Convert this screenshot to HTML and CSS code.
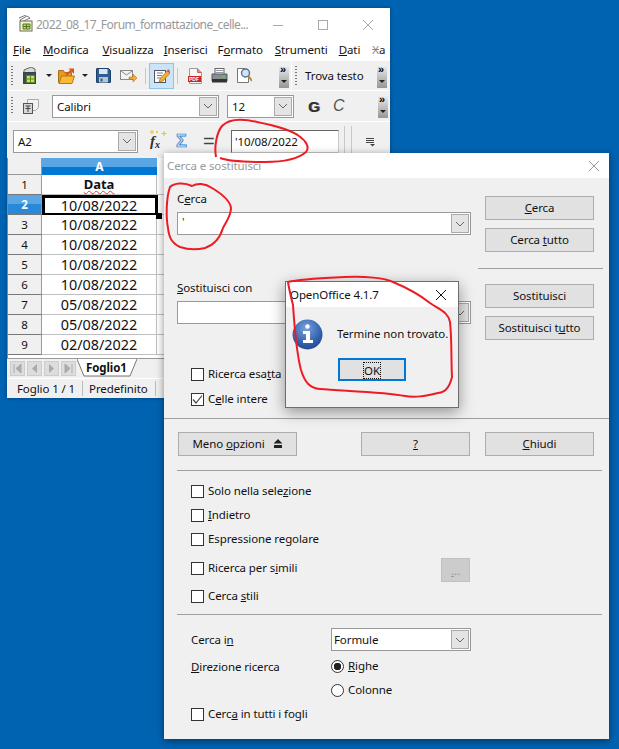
FILE: index.html
```html
<!DOCTYPE html>
<html lang="it">
<head>
<meta charset="utf-8">
<title>Cerca e sostituisci</title>
<link rel="stylesheet" href="styles.css">
</head>
<body>
<main class="desktop">

<section class="calc">
  <header class="calc-title">
    <svg class="calc-logo" width="15" height="17" viewBox="0 0 15 17"><path d="M2 5 9 1l3 2-8 4zM1 3l7-3" fill="none" stroke="#777" stroke-width="1"/><rect x="2" y="6" width="12" height="10" fill="#f4f4d8" stroke="#6a6a50"/><path d="M5 9h7v5H5zM8.500 9v5M5 11.500h7" fill="#b8d070" stroke="#4e7a18"/></svg>
    <span class="calc-name">2022_08_17_Forum_formattazione_celle...</span>
    <span class="win-btns">
      <svg width="12" height="12" viewBox="0 0 12 12"><path d="M1 6.500h10" stroke="#aaa"/></svg>
      <svg width="12" height="12" viewBox="0 0 12 12"><rect x="1.500" y="1.500" width="9" height="9" fill="none" stroke="#aaa"/></svg>
      <svg width="12" height="12" viewBox="0 0 12 12"><path d="M1 1l10 10M11 1 1 11" stroke="#aaa"/></svg>
    </span>
  </header>
  <nav class="menu">
    <span class="m-file"><u>F</u>ile</span><span class="m-mod"><u>M</u>odifica</span><span class="m-vis"><u>V</u>isualizza</span><span class="m-ins"><u>I</u>nserisci</span><span class="m-for">F<u>o</u>rmato</span><span class="m-str"><u>S</u>trumenti</span><span class="m-dat"><u>D</u>ati</span><span class="menu-cut"><s>X</s>a</span>
  </nav>
  <div class="bar bar-main">
    <i class="grip"></i>
    <svg class="ico ico-new" width="16" height="17" viewBox="0 0 16 17"><path d="M2 6V3l7-3 4 2v4" fill="#d9d9d9" stroke="#666"/><rect x="1.500" y="5.500" width="12" height="11" fill="#3f4a50" stroke="#3a4348"/><path d="M4.500 8.500h8v7h-8zM8.500 8.500v7M4.500 12h8" fill="#c6dc7e" stroke="#5d8a1e"/></svg>
    <i class="drop"></i>
    <svg class="ico ico-open" width="17" height="16" viewBox="0 0 17 16"><path d="M.5 2.500h5l1 2h7v10H.5z" fill="#e89a1c" stroke="#a8701a"/><path d="M1 15.500 3.500 8h13L14 15.500z" fill="#fbb934" stroke="#b4781f"/><path d="M8 7l6-5" stroke="#e2521c" stroke-width="2.200" fill="none"/><path d="M10.500.5H16V6z" fill="#e2521c"/></svg>
    <i class="drop"></i>
    <svg class="ico ico-save" width="15" height="15" viewBox="0 0 15 15"><path d="M1 .5h11.500l2 2V14a.5.5 0 0 1-.5.5H1a.5.5 0 0 1-.5-.5V1A.5.500 0 0 1 1 .5z" fill="#2b5d93" stroke="#1c3f66"/><rect x="3" y="1" width="8.500" height="5" fill="#dbe5ee"/><rect x="3" y="9" width="9" height="5.500" fill="#b8c6d2"/><rect x="4.500" y="10.500" width="2" height="3" fill="#2b5d93"/></svg>
    <svg class="ico ico-mail" width="17" height="12" viewBox="0 0 17 12"><rect x=".5" y=".5" width="12" height="9" fill="#f2f2f2" stroke="#8a8a8a"/><path d="M1 1l5.500 4L12 1" fill="none" stroke="#8a8a8a"/><path d="M9 7h4V4l4 4-4 4V9H9z" fill="#f2b02c" stroke="#b4781f" stroke-width=".6"/></svg>
    <i class="sep"></i>
    <span class="active-tool"><svg width="17" height="17" viewBox="0 0 17 17"><rect x="1.500" y="3.500" width="11" height="12" fill="#fff" stroke="#556"/><path d="M4 6h6M4 8.500h5M4 11h4" stroke="#778"/><path d="M7 12l7-8 3 2-7 8-4 1z" fill="#f2b02c" stroke="#a8701a" stroke-width=".7"/><path d="M14 4l1-2 2 2-.5 2z" fill="#e0457a"/></svg></span>
    <i class="sep sep-after"></i>
    <svg class="ico ico-pdf" width="14" height="16" viewBox="0 0 14 16"><path d="M1.500.500h8l4 4v11h-12z" fill="#f8f8f8" stroke="#999"/><path d="M9.500.5v4h4" fill="#e88" stroke="#c66"/><rect y="8" width="13" height="6" fill="#c9261d"/><text x="1" y="13" class="pdf-text">PDF</text></svg>
    <svg class="ico ico-print" width="17" height="15" viewBox="0 0 17 15"><rect x="4" y=".5" width="9" height="6" fill="#fff" stroke="#666"/><path d="M4.500 2.500h8M4.500 4.500h8" stroke="#99a"/><path d="M1 6h15v7H1z" fill="#8a8e92" stroke="#55585c"/><rect x="1" y="11" width="15" height="3.500" fill="#2f3337"/><rect x="11" y="8" width="3" height="1.500" fill="#5fc25f"/></svg>
    <svg class="ico ico-view" width="16" height="17" viewBox="0 0 16 17"><path d="M1.500 1.500h7l4 4v10h-11z" fill="#fff" stroke="#777"/><circle cx="9.500" cy="6" r="4" fill="#cfe4f6" stroke="#53718f" stroke-width="1.400"/><path d="M12.500 9l3.500 5" stroke="#c08a2a" stroke-width="2"/></svg>
    <span class="overflow ov-a"><b>»</b><em></em></span>
    <i class="bar-split"></i>
    <i class="grip grip-find"></i>
    <span class="find-text">Trova testo</span>
    <span class="overflow"><b>»</b><em></em></span>
  </div>
  <div class="bar bar-font">
    <i class="grip grip-short"></i>
    <svg class="ico ico-style" width="16" height="15" viewBox="0 0 16 15"><path d="M4.500.5h11v8l-3 3h-8z" fill="#f2f2f2" stroke="#aaa"/><rect x=".5" y="4.500" width="9" height="10" fill="#d8d8d8" stroke="#555"/><path d="M2.500 7h5M5 7v6M2.500 9.500h5" stroke="#444" fill="none"/></svg>
    <span class="combo combo-font"><span class="combo-text">Calibri</span><span class="arrow"><svg width="10" height="6" viewBox="0 0 10 6"><path d="M1 1l4 4 4-4" fill="none" stroke="#666"/></svg></span></span>
    <span class="combo combo-size"><span class="combo-text">12</span><span class="arrow"><svg width="10" height="6" viewBox="0 0 10 6"><path d="M1 1l4 4 4-4" fill="none" stroke="#666"/></svg></span></span>
    <span class="font-g">G</span>
    <span class="font-c">C</span>
    <span class="overflow ov-font"><b>»</b><em></em></span>
  </div>
  <div class="formula">
    <span class="combo combo-ref"><span class="combo-text">A2</span><span class="arrow"><svg width="10" height="6" viewBox="0 0 10 6"><path d="M1 1l4 4 4-4" fill="none" stroke="#666"/></svg></span></span>
    <span class="fx">f<sub>x</sub><svg class="fx-spark" width="17" height="8" viewBox="0 0 17 8"><path d="M2 0v4M0 2h4M7 1v2M6 2h2M14 1v5M11.500 3.500h5" stroke="#e9c21e" stroke-width="1"/></svg></span>
    <span class="sigma">Σ</span>
    <span class="equals">=</span>
    <span class="input-line">'10/08/2022</span>
    <i class="form-sep"></i>
    <i class="form-sep form-sep-b"></i>
    <svg class="form-menu" width="10" height="9" viewBox="0 0 10 9"><path d="M0 .5h8M0 2.500h8M0 4.500h8" stroke="#444"/><path d="M4 6h5L6.500 8.500z" fill="#444"/></svg>
  </div>
  <div class="sheet">
    <div class="sheet-row sheet-head"><span class="rh corner"></span><span class="cell col-a">A</span></div>
    <div class="sheet-row"><span class="rh">1</span><span class="cell head-cell">Data</span><span class="cell-b"></span></div>
    <div class="sheet-row"><span class="rh rh-sel">2</span><span class="cell cell-sel">10/08/2022<i class="handle"></i></span><span class="cell-b"></span></div>
    <div class="sheet-row"><span class="rh">3</span><span class="cell">10/08/2022</span><span class="cell-b"></span></div>
    <div class="sheet-row"><span class="rh">4</span><span class="cell">10/08/2022</span><span class="cell-b"></span></div>
    <div class="sheet-row"><span class="rh">5</span><span class="cell">10/08/2022</span><span class="cell-b"></span></div>
    <div class="sheet-row"><span class="rh">6</span><span class="cell">10/08/2022</span><span class="cell-b"></span></div>
    <div class="sheet-row"><span class="rh">7</span><span class="cell">05/08/2022</span><span class="cell-b"></span></div>
    <div class="sheet-row"><span class="rh">8</span><span class="cell">05/08/2022</span><span class="cell-b"></span></div>
    <div class="sheet-row"><span class="rh">9</span><span class="cell">02/08/2022</span><span class="cell-b"></span></div>
  </div>
  <div class="tabs">
    <span class="tab-nav"><svg width="13" height="13" viewBox="0 0 13 13"><path d="M3 2v9M10 2v9L5 6.500z" fill="#aaa" stroke="#aaa"/></svg></span>
    <span class="tab-nav"><svg width="13" height="13" viewBox="0 0 13 13"><path d="M9 2v9L4 6.500z" fill="#aaa"/></svg></span>
    <span class="tab-nav"><svg width="13" height="13" viewBox="0 0 13 13"><path d="M4 2v9l5-4.500z" fill="#aaa"/></svg></span>
    <span class="tab-nav"><svg width="13" height="13" viewBox="0 0 13 13"><path d="M10 2v9M3 2v9l5-4.500z" fill="#aaa" stroke="#aaa"/></svg></span>
    <svg class="tab-shape" width="60" height="19" viewBox="0 0 60 19"><path d="M0 0l7 17h46l7-17" fill="#fff" stroke="#777"/></svg>
    <span class="tab-name">Foglio1</span>
  </div>
  <footer class="status"><span>Foglio 1 / 1</span><span>Predefinito</span></footer>
</section>

<section class="dialog">
  <header class="dlg-title"><span>Cerca e sostituisci</span>
    <svg width="12" height="12" viewBox="0 0 12 12"><path d="M1 1l10 10M11 1 1 11" stroke="#999"/></svg>
  </header>
  <div class="dlg-top">
    <div class="dlg-left">
      <label class="field-label"><span>C<u>e</u>rca</span></label>
      <span class="combo combo-wide"><span class="combo-text combo-quote">'</span><span class="arrow"><svg width="10" height="6" viewBox="0 0 10 6"><path d="M1 1l4 4 4-4" fill="none" stroke="#666"/></svg></span></span>
      <label class="field-label label-replace"><span><u>S</u>ostituisci con</span></label>
      <span class="combo combo-wide"><span class="combo-text"></span><span class="arrow"><svg width="10" height="6" viewBox="0 0 10 6"><path d="M1 1l4 4 4-4" fill="none" stroke="#666"/></svg></span></span>
      <div class="check check-first"><i class="box"></i><span>Ricerca esa<u>t</u>ta</span></div>
      <div class="check check-second"><i class="box"><svg width="13" height="13" viewBox="0 0 13 13"><path d="M2 6.500 5 10l6-7.500" fill="none" stroke="#444" stroke-width="1.200"/></svg></i><span>C<u>e</u>lle intere</span></div>
    </div>
    <div class="dlg-right">
      <button class="btn" type="button"><u>C</u>erca</button>
      <button class="btn" type="button">Cerca <u>t</u>utto</button>
      <hr class="rule-right">
      <button class="btn" type="button">Sostituisci</button>
      <button class="btn" type="button">Sostituisci t<u>u</u>tto</button>
    </div>
  </div>
  <hr class="rule-full">
  <div class="dlg-actions">
    <button class="btn btn-more" type="button"><span>Meno <u>o</u>pzioni</span><svg width="10" height="10" viewBox="0 0 10 10"><path d="M5 0l4.500 4.500H.5zM1 6h8v3H1z" fill="#222"/></svg></button>
    <button class="btn btn-help" type="button"><u>?</u></button>
    <button class="btn" type="button"><u>C</u>hiudi</button>
  </div>
  <hr class="rule-inner">
  <div class="options">
    <div class="check"><i class="box"></i><span>Solo nella sele<u>z</u>ione</span></div>
    <div class="check"><i class="box"></i><span><u>I</u>ndietro</span></div>
    <div class="check"><i class="box"></i><span>Espressione re<u>g</u>olare</span></div>
    <div class="check check-similar"><i class="box"></i><span>Ricerca per s<u>i</u>mili</span><span class="btn-dots"><u>.</u>..</span></div>
    <div class="check check-styles"><i class="box"></i><span>Cerca <u>s</u>tili</span></div>
  </div>
  <hr class="rule-inner rule-second">
  <div class="scope">
    <span class="scope-label scope-first">Cerca i<u>n</u></span>
    <span class="combo combo-in"><span class="combo-text">Formule</span><span class="arrow"><svg width="10" height="6" viewBox="0 0 10 6"><path d="M1 1l4 4 4-4" fill="none" stroke="#666"/></svg></span></span>
    <span class="scope-label scope-dir"><u>D</u>irezione ricerca</span>
    <div class="check"><i class="radio radio-on"></i><span><u>R</u>ighe</span></div>
    <span></span>
    <div class="check"><i class="radio"></i><span>Colonne</span></div>
    <div class="check scope-wide"><i class="box"></i><span>Cerc<u>a</u> in tutti i fogli</span></div>
  </div>
</section>

<section class="msgbox">
  <header class="msg-title"><span>OpenOffice 4.1.7</span>
    <svg width="12" height="12" viewBox="0 0 12 12"><path d="M1 1l10 10M11 1 1 11" stroke="#111"/></svg>
  </header>
  <div class="msg-body">
    <svg class="msg-icon" width="31" height="31" viewBox="0 0 31 31"><defs><radialGradient id="ig" cx=".45" cy=".3" r=".8"><stop offset="0" stop-color="#7da2dc"/><stop offset=".6" stop-color="#3463b0"/><stop offset="1" stop-color="#1c3f85"/></radialGradient></defs><circle cx="15.500" cy="15.500" r="15" fill="url(#ig)"/><circle cx="15.500" cy="7.500" r="2.200" fill="#fff"/><path d="M11 12h7v9h3v3H11v-3h3v-6h-3z" fill="#fff"/></svg>
    <span class="msg-text">Termine non trovato.</span>
  </div>
  <div class="msg-actions"><button class="btn-ok" type="button"><span>OK</span></button></div>
</section>

<svg class="ink" width="619" height="749" viewBox="0 0 619 749">
  <path d="M216 157C214 146 217 132 222 126 229 119 240 118 257 122 272 125 290 129 299 136 306 141 310 147 306 152 298 159 285 162 265 162 245 162 228 161 220 158"/>
  <path d="M170 187C174 183 184 182 192 186 197 183 205 183 212 188 222 194 230 200 231 208 231 216 226 222 223 228 220 238 214 245 205 248 196 250 186 249 180 247 172 243 169 238 168 228 166 218 166 198 170 187Z"/>
  <path d="M288 282C300 279 325 278 345 277 365 276 385 278 393 282 405 287 420 295 430 303 440 310 448 312 450 322 452 340 451 360 452 377 450 385 447 392 438 393 425 396 415 398 405 396 385 392 345 391 320 389 310 388 305 383 301 370 297 355 295 335 293 305 291 297 289 289 288 282Z"/>
</svg>
</main>
</body>
</html>
```
FILE: styles.css
```css
* { box-sizing: border-box; }
html, body { margin: 0; padding: 0; }
body { width: 619px; height: 749px; overflow: hidden; font: 11.500px/16px "Noto Sans", "Open Sans", sans-serif; letter-spacing: -.1px; color: #111; }
.desktop { position: relative; width: 619px; height: 749px; background: #0063b1; overflow: hidden; }
u { text-underline-offset: 1px; }
i { font-style: normal; display: block; flex: none; }

.calc { position: absolute; left: 7px; top: 8px; width: 383px; height: 390px; background: #f0f0f0; box-shadow: 0 0 4px rgba(0,0,0,.35); display: flex; flex-direction: column; }
.calc-title { height: 33px; flex: none; background: #fff; display: flex; align-items: center; padding-left: 11px; }
.calc-logo { flex: none; margin-top: -2px; }
.calc-name { margin-left: 3px; color: #999; font-size: 12px; letter-spacing: -.55px; white-space: nowrap; width: 222px; }
.win-btns { display: flex; gap: 33px; margin-left: 14px; }
.menu { height: 19px; flex: none; background: #fff; display: flex; padding: 0 0 2px 6px; white-space: nowrap; align-items: center; }
.m-mod { margin-left: 12px; }
.m-vis { margin-left: 14px; }
.m-ins { margin-left: 10px; }
.m-for { margin-left: 10px; }
.m-str { margin-left: 12px; }
.m-dat { margin-left: 11px; }
.menu-cut { color: #222; margin-left: 12px; }
.menu-cut s { color: #888; }

.bar { display: flex; align-items: center; position: relative; flex: none; border-bottom: 1px solid #fff; }
.bar-main { height: 31px; border-top: 1px solid #fff; padding-left: 4px; }
.bar-font { height: 31px; padding: 0 2px 0 4px; }
.grip { width: 2px; height: 20px; background: repeating-linear-gradient(#777 0 1px, transparent 1px 3px); }
.grip-short { height: 18px; }
.grip-find { margin-left: 3px; }
.ico { flex: none; display: block; }
.ico-new { margin-left: 9px; }
.drop { width: 0; height: 0; border: 3px solid transparent; border-top: 3px solid #222; border-bottom: 0; margin-left: 8px; }
.ico-open { margin-left: 6px; }
.ico-open + .drop { margin-left: 7px; }
.ico-save { margin-left: 8px; }
.ico-mail { margin-left: 9px; }
.sep { width: 1px; height: 16px; background: #c8c8c8; margin: 0 3px 0 8px; }
.active-tool { width: 25px; height: 26px; background: #cce4f7; border: 1px solid #8fc4ec; display: flex; align-items: center; justify-content: center; flex: none; }
.sep-after { margin: 0 10px 0 3px; }
.pdf-text { font: bold 5px "Liberation Sans", sans-serif; fill: #fff; letter-spacing: 0; }
.ico-print { margin-left: 9px; }
.ico-view { margin-left: 8px; }
.overflow { width: 10px; height: 24px; flex: none; background: linear-gradient(#f0f0f0 0 8%, #dcdcdc 25%, #969696); position: relative; display: block; }
.overflow b { position: absolute; left: 1px; top: -1px; font: bold 11px/12px "Liberation Sans", sans-serif; color: #000; letter-spacing: 0; }
.overflow em { position: absolute; left: 2px; bottom: 5px; border: 3px solid transparent; border-top: 3px solid #222; border-bottom: 0; }
.ov-a { margin-left: 27px; }
.bar-split { width: 1px; height: 30px; background: #fff; margin-left: 2px; }
.find-text { margin-left: 8px; width: 72px; white-space: nowrap; }
.combo { display: flex; background: #fff; border: 1px solid #999; padding: 1px; flex: none; }
.combo-text { flex: 1; padding-left: 3px; line-height: 19px; white-space: nowrap; overflow: hidden; }
.arrow { width: 18px; flex: none; background: #e4e4e4; border: 1px solid #aaa; display: flex; align-items: center; justify-content: center; }
.ico-style { margin-left: 10px; }
.combo-font { width: 167px; height: 23px; margin-left: 13px; }
.combo-size { width: 67px; height: 23px; margin-left: 8px; }
.font-g { margin-left: 14px; font: bold 15px "Liberation Sans", sans-serif; width: 25px; color: #333; text-shadow: 1px 0 0 #666; letter-spacing: 0; }
.font-c { font: italic 16px "Liberation Sans", sans-serif; color: #555; letter-spacing: 0; }
.ov-font { margin-left: auto; }

.formula { height: 36px; flex: none; display: flex; align-items: center; padding: 2px 0 0 6px; position: relative; }
.combo-ref { width: 125px; height: 23px; }
.fx { margin-left: 12px; font: italic bold 15px "Liberation Serif", serif; color: #333; width: 17px; position: relative; letter-spacing: 0; }
.fx sub { font-size: 10px; line-height: 0; color: #222; vertical-align: -2px; }
.fx-spark { position: absolute; left: 0; top: -3px; }
.sigma { margin-left: 9px; width: 15px; font: bold 18px/20px "Liberation Sans", sans-serif; color: #bfe0fa; -webkit-text-stroke: .7px #1e78c8; letter-spacing: 0; }
.equals { margin-left: 12px; font: 20px/20px "Liberation Sans", sans-serif; color: #444; width: 12px; letter-spacing: 0; }
.input-line { margin-left: 16px; width: 108px; height: 23px; background: #fff; border: 1px solid #c8c8c8; border-top-color: #666; border-left-color: #666; padding-left: 3px; line-height: 21px; }
.form-sep { width: 1px; height: 30px; background: #c8c8c8; margin-left: 5px; }
.form-sep-b { margin-left: 6px; }
.form-menu { margin-left: 14px; margin-top: 3px; }

.sheet { flex: none; background: #fff; height: 200px; overflow: hidden; border-left: 1px solid #888; }
.sheet-row { display: flex; height: 20px; }
.sheet-head { height: 17px; }
.rh { width: 34px; flex: none; background: #f0f0f0; border-right: 1px solid #999; border-bottom: 1px solid #777; text-align: center; line-height: 19px; }
.corner { border-bottom-color: #999; }
.rh-sel { background: linear-gradient(#5aa6e4 0 50%, #2a88d8 50%); color: #fff; font-weight: 700; }
.cell { width: 115px; flex: none; border-right: 1px solid #c0c0c0; border-bottom: 1px solid #c0c0c0; text-align: center; font-size: 14.400px; letter-spacing: 0; line-height: 20px; position: relative; }
.cell-b { flex: 1; border-bottom: 1px solid #c0c0c0; }
.col-a { background: linear-gradient(#5aa6e4 0 50%, #0078d4 50%); color: #fff; font-size: 12px; font-weight: 700; line-height: 17px; border: 0; }
.head-cell { font-size: 13px; font-weight: 700; line-height: 19px; text-decoration: underline wavy #e33 1px; text-underline-offset: 1px; }
.cell-sel { border: 3px solid #000; border-bottom-width: 2px; line-height: 15px; padding-right: 2px; z-index: 1; width: 116px; margin-right: -1px; }
.handle { position: absolute; right: -7px; bottom: -6px; width: 6px; height: 6px; background: #000; }

.tabs { height: 20px; flex: none; display: flex; align-items: center; position: relative; padding-left: 3px; gap: 2px; border-top: 1px solid #999; }
.tab-nav { width: 15px; height: 15px; background: #ddd; border: 1px solid #ccc; display: flex; align-items: center; justify-content: center; }
.tab-shape { position: absolute; left: 70px; top: 0; }
.tab-name { position: absolute; left: 79px; top: 1px; font-weight: 700; }
.status { height: 20px; flex: none; display: flex; align-items: center; padding-left: 10px; border-top: 1px solid #fff; }
.status span { padding-right: 7px; border-right: 1px solid #bbb; line-height: 15px; margin-right: 6px; }

.dialog { position: absolute; left: 164px; top: 153px; width: 445px; height: 586px; background: #f0f0f0; box-shadow: 0 2px 8px rgba(0,0,0,.45); }
.dlg-title { height: 25px; background: #fff; color: #999; display: flex; align-items: center; justify-content: space-between; padding: 0 9px 0 3px; }
.dlg-top { display: grid; grid-template-columns: 314px 125px; height: 239px; }
.dlg-left { padding-left: 13px; }
.field-label { display: block; padding-top: 14px; line-height: 14px; height: 34px; }
.label-replace { padding-top: 0; height: 21px; margin-top: 44px; line-height: 18px; margin-bottom: 1px; }
.combo-wide { width: 294px; height: 23px; }
.combo-quote { line-height: 15px; color: #333; }
.check { display: flex; align-items: center; height: 24px; white-space: nowrap; }
.box { width: 13px; height: 13px; background: #fff; border: 1px solid #333; margin-right: 4px; position: relative; }
.box svg { position: absolute; left: -1px; top: -1px; }
.check-first { margin: 38px 0 0 14px; }
.check-second { margin: 1px 0 0 14px; }
.dlg-right { padding: 18px 0 0 7px; display: flex; flex-direction: column; }
.btn { width: 109px; height: 24px; padding: 0; background: #e1e1e1; border: 1px solid #adadad; font: inherit; letter-spacing: inherit; color: #111; flex: none; margin-bottom: 8px; }
.rule-right { width: 125px; margin: 8px 0 15px -7px; border: 0; border-top: 1px solid #a0a0a0; }
.rule-full { margin: 1px 0 0; border: 0; border-top: 1px solid #a0a0a0; }
.dlg-actions { display: flex; padding: 13px 0 0 14px; height: 51px; }
.dlg-actions .btn { margin: 0; }
.dlg-actions .btn-more { width: 119px; display: flex; align-items: center; justify-content: center; gap: 8px; }
.dlg-actions .btn-help { margin-left: 64px; margin-right: 15px; }
.rule-inner { margin: 0 7px 0 13px; border: 0; border-top: 1px solid #a0a0a0; }
.options { padding: 8px 0 0 27px; height: 143px; }
.check-similar { margin-top: 5px; position: relative; }
.btn-dots { position: absolute; left: 250px; top: 2px; width: 29px; height: 24px; background: #ccc; border: 1px solid #c0c0c0; color: #999; text-align: center; line-height: 24px; }
.check-styles { margin-top: 4px; }
.scope { display: grid; grid-template-columns: 140px 140px; grid-template-rows: 26px; grid-auto-rows: 24px; padding: 13px 0 0 27px; align-items: center; }
.scope-wide { grid-column: 1 / 3; }
.scope-first { align-self: start; line-height: 23px; }
.scope-dir { margin-top: 2px; }
.combo-in { width: 140px; height: 23px; align-self: start; }
.combo-in .combo-text { padding-left: 1px; }
.radio { width: 13px; height: 13px; border-radius: 50%; background: #fff; border: 1px solid #333; margin-right: 4px; }
.radio-on { background: radial-gradient(#222 0 3.500px, #fff 4px); }

.msgbox { position: absolute; left: 285px; top: 281px; width: 174px; height: 127px; background: #f0f0f0; border: 1px solid #6e6e6e; box-shadow: 0 4px 14px rgba(0,0,0,.4); }
.msg-title { height: 25px; background: #fff; display: flex; align-items: center; justify-content: space-between; padding: 0 11px 0 4px; }
.msg-body { display: flex; align-items: center; padding: 8px 0 0 6px; height: 46px; }
.msg-icon { flex: none; }
.msg-text { margin-left: 14px; white-space: nowrap; }
.msg-actions { padding: 5px 0 0 52px; }
.btn-ok { width: 68px; height: 23px; padding: 2px; background: #e1e1e1; border: 2px solid #0078d7; font: inherit; letter-spacing: inherit; display: block; }
.btn-ok span { display: block; width: 18px; height: 17px; margin: 0 auto; border: 1px dotted #111; line-height: 15px; color: #111; }

.ink { position: absolute; left: 0; top: 0; pointer-events: none; }
.ink path { fill: none; stroke: #ed1c24; stroke-width: 2; stroke-linejoin: round; }
```
